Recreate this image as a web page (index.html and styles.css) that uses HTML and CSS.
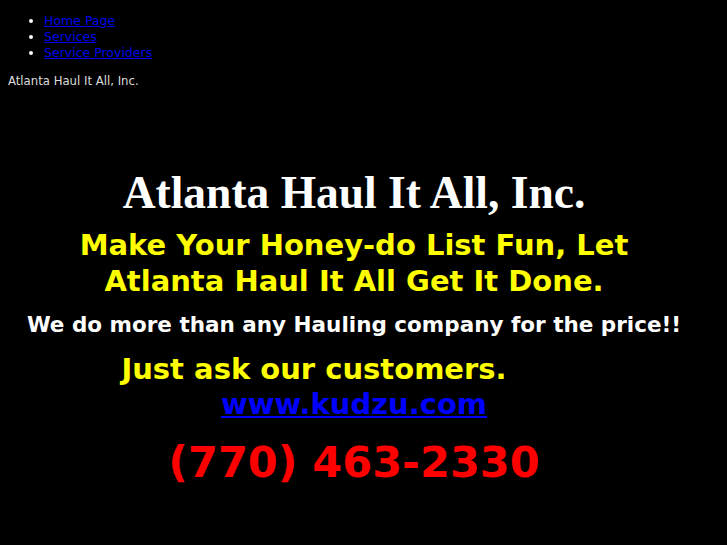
FILE: index.html
```html
<!DOCTYPE html>
<html>
<head>
<meta charset="utf-8">
<title>Atlanta Haul It All, Inc.</title>
<link rel="stylesheet" href="styles.css">
</head>
<body>
<ul class="nav">
  <li><a href="#">Home Page</a></li>
  <li><a href="#">Services</a></li>
  <li><a href="#">Service Providers</a></li>
</ul>
<p class="brand">Atlanta Haul It All, Inc.</p>
<div class="main">
  <h1 class="title">Atlanta Haul It All, Inc.</h1>
  <p class="slogan">Make Your Honey-do List Fun, Let<br>Atlanta Haul It All Get It Done.</p>
  <p class="more">We do more than any Hauling company for the price!!</p>
  <p class="ask">Just ask our customers.</p>
  <p class="site"><a href="#">www.kudzu.com</a></p>
  <p class="phone">(770) 463-2330</p>
</div>
</body>
</html>
```
FILE: styles.css
```css
html, body {
  background: #000;
}
body {
  margin: 8px;
  font-family: "DejaVu Sans", sans-serif;
  color: #fff;
}
a {
  color: #0000ee;
}
.nav {
  margin: 5px 0 0;
  padding-left: 36px;
  font-size: 12.5px;
  line-height: 16px;
}
.brand {
  margin: 13px 0 0;
  font-size: 11.7px;
  line-height: 14px;
  color: #ddd;
}
.main {
  margin-right: 11px;
  margin-left: -8px;
  text-align: center;
}
.title {
  margin: 80px 0 0;
  font-family: "Liberation Serif", serif;
  font-weight: bold;
  font-size: 45.5px;
  line-height: 50px;
  color: #fff;
}
.slogan {
  margin: 9px 0 0;
  font-weight: bold;
  font-size: 29px;
  line-height: 36px;
  color: #ffff00;
}
.more {
  margin: 13px 0 0;
  font-weight: bold;
  font-size: 21.5px;
  line-height: 26px;
  color: #fff;
}
.ask {
  margin: 14px 0 0;
  padding-right: 80px;
  font-weight: bold;
  font-size: 29px;
  line-height: 34px;
  color: #ffff00;
}
.site {
  margin: 1px 0 0;
  font-weight: bold;
  font-size: 29px;
  line-height: 34px;
}
.site a {
  color: #0000ff;
}
.phone {
  margin: 16px 0 0;
  font-weight: bold;
  font-size: 43px;
  line-height: 50px;
  color: #ff0000;
}
```
